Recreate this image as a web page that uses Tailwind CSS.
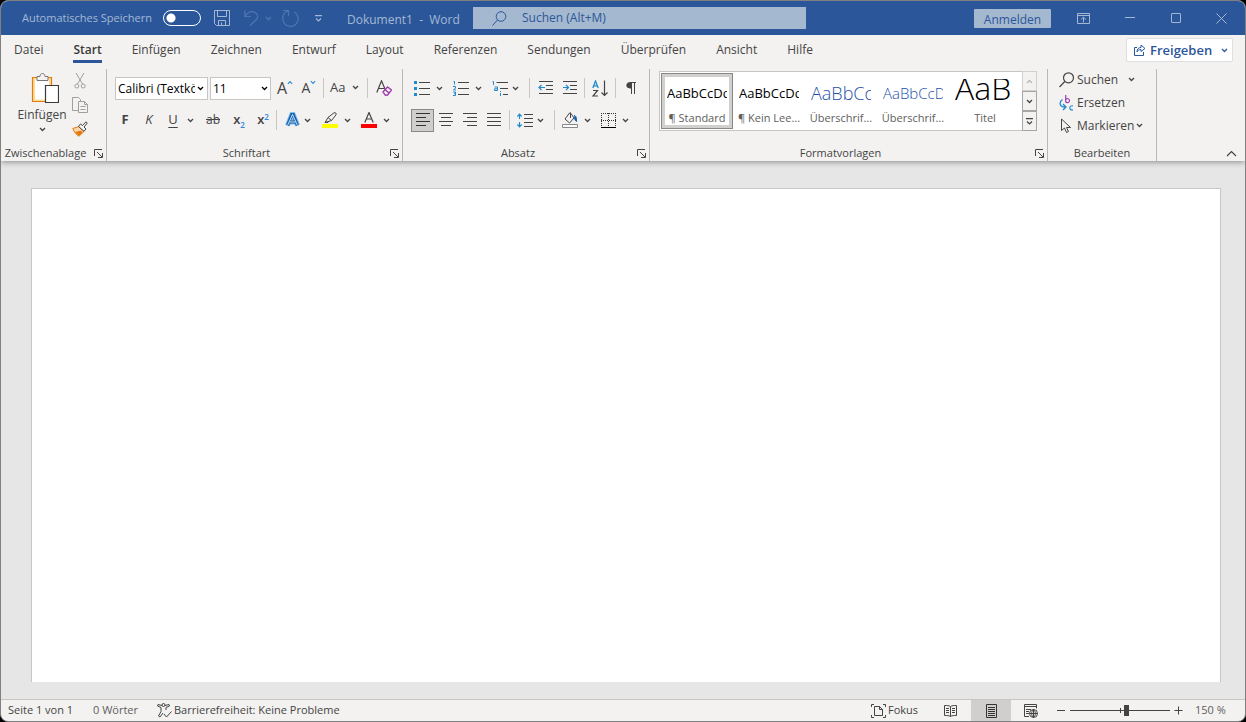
<!DOCTYPE html>
<html lang="de">
<head>
<meta charset="utf-8">
<meta name="viewport" content="width=device-width, initial-scale=1">
<title>Dokument1 - Word</title>
<script src="https://cdn.jsdelivr.net/npm/@tailwindcss/browser@4"></script>
</head>
<body class="bg-black font-['Open_Sans','Noto_Sans',sans-serif] text-xs text-[#444444]">
<svg class="hidden">
  <symbol id="chev" viewBox="0 0 7 5"><path d="M1 1l2.5 2.5L6 1" fill="none" stroke="currentColor" stroke-width="1.3"/></symbol>
  <symbol id="launch" viewBox="0 0 9 9"><path d="M.5 7V.5H8M3 3l5 5M8.500 4v4.500H4" fill="none" stroke="currentColor"/></symbol>
</svg>
<div class="flex h-screen min-w-[1160px] flex-col overflow-hidden rounded-lg border border-[#808080] bg-[#f3f2f1]">

  <!-- Title bar -->
  <header class="flex h-[34px] shrink-0 items-center bg-[#2b579a] text-[#a4b8d4]">
    <label for="autosave" class="ml-[21px] w-[141px] text-[11px] whitespace-nowrap">Automatisches Speichern</label>
    <input id="autosave" type="checkbox" class="h-4 w-[38px] appearance-none rounded-full border border-white bg-[radial-gradient(circle_at_7px_7px,white_4px,transparent_5px)]">
    <button aria-label="Speichern" class="ml-[11px] grid size-5 place-items-center"><svg class="size-4" viewBox="0 0 16 16" fill="none" stroke="currentColor"><path d="M.5.5h15v15H2.500L.5 13.500zM3.500.5v6h9v-6M4.500 15.500v-5h7v5M7.500 15v-2.500"/></svg></button>
    <button aria-label="Rückgängig" class="ml-3 flex items-center gap-1.5 text-[#4f76b0]"><svg class="h-4 w-[15px]" viewBox="0 0 15 16" fill="none" stroke="currentColor" stroke-width="1.200"><path d="M.8.5v6h6M1 6.300C4 2 8 .8 11 2.500c3.500 2 3.500 5 1 7.500L6 15.500"/></svg><svg class="h-[5px] w-[7px]"><use href="#chev"/></svg></button>
    <button aria-label="Wiederholen" class="ml-2.5 text-[#4f76b0]"><svg class="h-[18px] w-[17px]" viewBox="0 0 17 18" fill="none" stroke="currentColor" stroke-width="1.200"><path d="M1 1.500h5.500V7M6.500 1.800C2.500 3 .8 6 .8 9.500a7.700 7.700 0 1 0 11.500-6.500"/></svg></button>
    <button aria-label="Symbolleiste anpassen" class="ml-4"><svg class="h-[7px] w-[7px]" viewBox="0 0 7 7" fill="none" stroke="currentColor" stroke-width="1.200"><path d="M0 .6h7M1 3.500L3.500 6 6 3.500"/></svg></button>
    <h1 class="ml-[25px] w-[126px] whitespace-pre pt-1">Dokument1  -  Word</h1>
    <div class="flex h-[22px] w-[333px] items-center bg-[#a4b8d0] text-[#2b579a]">
      <svg class="ml-[19px] size-[15px] shrink-0" viewBox="0 0 15 15" fill="none" stroke="currentColor"><circle cx="9" cy="5.500" r="4.800"/><path d="M5.500 9L.5 14.500"/></svg>
      <input type="text" aria-label="Suchen" placeholder="Suchen (Alt+M)" class="ml-[15px] w-full min-w-0 outline-none placeholder:text-[#2b579a]">
    </div>
    <button class="mr-[26px] ml-auto h-[19px] w-[77px] rounded-[1px] bg-[#a4b8d0] pt-0.5 leading-[17px] text-[#2b579a]">Anmelden</button>
    <button aria-label="Menüband-Anzeigeoptionen"><svg class="h-[11px] w-[13px]" viewBox="0 0 13 11" fill="none" stroke="currentColor"><path d="M.5.5h12v10H.5zM.5 2.500h12M6.500 9.500V4.500M4 6.500l2.500-2.300L9 6.500"/></svg></button>
    <button aria-label="Minimieren" class="ml-[35px]"><svg class="h-[11px] w-2.5" viewBox="0 0 10 11" stroke="currentColor"><path d="M0 4.500h10"/></svg></button>
    <button aria-label="Maximieren" class="ml-9"><svg class="size-2.5" viewBox="0 0 10 10" fill="none" stroke="currentColor"><rect x=".5" y=".5" width="9" height="9" rx=".5"/></svg></button>
    <button aria-label="Schließen" class="mr-[18px] ml-[35px]"><svg class="size-[11px]" viewBox="0 0 11 11" stroke="currentColor"><path d="M.5.5l10 10M10.500.5l-10 10"/></svg></button>
  </header>

  <!-- Ribbon tabs -->
  <nav class="z-20 flex h-[31px] shrink-0 items-start gap-[30px] bg-[#f3f2f1] pl-[13px] leading-[30px]">
    <a href="#">Datei</a>
    <a href="#" class="flex h-7 flex-col border-b-3 border-[#2b579a] font-semibold text-[#3b3a39]">Start</a>
    <a href="#">Einfügen</a>
    <a href="#">Zeichnen</a>
    <a href="#">Entwurf</a>
    <a href="#">Layout</a>
    <a href="#">Referenzen</a>
    <a href="#">Sendungen</a>
    <a href="#">Überprüfen</a>
    <a href="#">Ansicht</a>
    <a href="#">Hilfe</a>
    <button class="mt-[3px] mr-3 ml-auto flex h-6 w-[107px] items-center rounded-[2px] border border-[#e1dfdd] bg-white pl-1.5 text-[13px] font-semibold text-[#2b579a]"><svg class="mr-1 h-3 w-[13px]" viewBox="0 0 13 12" fill="none" stroke="currentColor"><path d="M4 3.500H1.500v8h9V8M4 8c0-3 1.500-4.500 4-4.500V1L12 4.500 8 7.500V5.500C6 5.500 5 6.500 4 8z"/></svg>Freigeben<svg class="ml-auto mr-1 h-[5px] w-[7px]"><use href="#chev"/></svg></button>
  </nav>

  <!-- Ribbon -->
  <section class="z-10 flex h-[95px] shrink-0 items-start pt-[3px] shadow-[0_1px_6px_#00000066]">

    <div class="flex h-[92px] w-[106px] shrink-0 flex-col border-r border-[#b8b7b6] pt-1">
      <div class="flex items-start">
        <button class="ml-[13px] flex w-14 flex-col items-center"><svg class="ml-1.5 h-8 w-7" viewBox="0 0 28 32" fill="none"><path d="M1.500 4.500h19v24h-19z" fill="#f9dd9a" stroke="#e57a0c" stroke-width="1.200"/><path d="M4 6.500h14v20H4z" fill="#fff"/><path d="M6 7.500v-4h3c0-4 5-4 5 0h3v4z" fill="#f3f2f1" stroke="#777"/><path d="M14.500 12.500h13v17h-13z" fill="#fff" stroke="#3b3a39" stroke-width="1.200"/></svg><span class="mt-0.5 leading-4">Einfügen</span><svg class="mt-1 h-[5px] w-[7px]"><use href="#chev"/></svg></button>
        <div class="flex flex-col">
          <button aria-label="Ausschneiden" class="-mt-1 grid h-6 w-5 place-items-center text-[#a19f9d]"><svg class="h-4 w-3" viewBox="0 0 12 16" fill="none" stroke="currentColor"><path d="M2 0l6.500 11M10 0L3.500 11"/><circle cx="2.800" cy="13" r="2"/><circle cx="9.200" cy="13" r="2"/></svg></button>
          <button aria-label="Kopieren" class="grid h-6 w-5 place-items-center text-[#a19f9d]"><svg class="size-4" viewBox="0 0 16 16" fill="none" stroke="currentColor"><path d="M6 13.500H.5V.5h6l2 2v2"/><path d="M6.500 4.500h6l3 3v8h-9zM12.500 4.500v3h3M8.500 9.500h5M8.500 12.500h5"/></svg></button>
          <button aria-label="Format übertragen" class="grid h-6 w-5 place-items-center"><svg class="size-4" viewBox="0 0 16 16"><path d="M.8 7.500L7 5.500l5 5L7 15.200C4.500 14 2 11 .8 7.500z" fill="#f8d7a8" stroke="#e57a0c"/><path d="M3 11l6-1.500 1.500 2L7 15z" fill="#e57a0c"/><path d="M6.500 5.500l2-2.500 2 1.500L14 .8l1.300 1.300L12 6l2 2-2 2.300z" fill="#f3f2f1" stroke="#444"/></svg></button>
        </div>
      </div>
      <div class="mt-auto flex h-4 items-center"><span class="flex-1 pr-1 text-center text-[11px]">Zwischenablage</span><button aria-label="Zwischenablage öffnen" class="mr-[3px] w-[9px]"><svg class="size-[9px]"><use href="#launch"/></svg></button></div>
    </div>

    <div class="flex h-[92px] w-[296px] shrink-0 flex-col border-r border-[#b8b7b6] pt-[7px]">
      <div class="ml-2 flex h-6 items-center">
        <label class="flex h-[23px] w-[93px] items-center self-end border border-[#c8c6c4] bg-white px-0.5 text-black"><input aria-label="Schriftart" value="Calibri (Textkörper)" class="w-[77px] outline-none"><svg class="ml-0.5 h-[5px] w-[7px] shrink-0"><use href="#chev"/></svg></label>
        <label class="ml-0.5 flex h-[23px] w-[61px] items-center self-end border border-[#c8c6c4] bg-white px-0.5 text-black"><input aria-label="Schriftgrad" value="11" class="w-[46px] outline-none"><svg class="ml-0.5 h-[5px] w-[7px] shrink-0"><use href="#chev"/></svg></label>
        <button aria-label="Schriftgrad vergrößern" class="ml-0.5 flex w-6 justify-center"><span class="text-base leading-5">A</span><svg class="mt-0.5 h-[5px] w-[6px] text-[#2b88d8]" viewBox="0 0 7 5"><path d="M1 4l2.500-2.500L6 4" fill="none" stroke="currentColor" stroke-width="1.300"/></svg></button>
        <button aria-label="Schriftgrad verkleinern" class="flex w-6 justify-center"><span class="text-sm leading-5">A</span><svg class="mt-0.5 h-[5px] w-[6px] text-[#2b88d8]"><use href="#chev"/></svg></button>
        <i class="mx-0.5 h-5 w-px bg-[#c8c6c4]"></i>
        <button aria-label="Groß-/Kleinschreibung" class="ml-1 flex w-[29px] items-center justify-between text-[13px]">Aa<svg class="h-[5px] w-[7px]"><use href="#chev"/></svg></button>
        <i class="mr-1 ml-2 h-5 w-px bg-[#c8c6c4]"></i>
        <button aria-label="Formatierung löschen" class="grid w-6 place-items-center"><svg class="size-4" viewBox="0 0 16 16" fill="none"><path d="M.8 12.500L5.500.8l3.800 9M2.500 8.500h5.500" stroke="#444" stroke-width="1.200"/><path d="M7 12l4.500-5 4 3-4 5-2 .3z" fill="#f3f2f1" stroke="#a03cb0" stroke-width="1.400"/><path d="M9 9.500l4 3.500" stroke="#a03cb0" stroke-width="1.400"/></svg></button>
      </div>
      <div class="mt-2 ml-1.5 flex h-6 items-center text-[13px]">
        <button class="w-6 font-bold">F</button>
        <button class="w-6 italic">K</button>
        <button class="w-6 underline underline-offset-3">U</button>
        <button aria-label="Unterstreichungsart" class="ml-0.5 w-2"><svg class="h-[5px] w-[7px]"><use href="#chev"/></svg></button>
        <button class="ml-1.5 w-6 text-xs line-through">ab</button>
        <button class="ml-0.5 w-6 font-semibold">x<sub class="-bottom-1 text-[8px] text-[#2b88d8]">2</sub></button>
        <button class="w-6 font-semibold">x<sup class="text-[8px] text-[#2b88d8]">2</sup></button>
        <i class="mr-[3px] ml-px h-5 w-px bg-[#c8c6c4]"></i>
        <button aria-label="Texteffekte" class="grid w-6 place-items-center"><svg class="h-4 w-[15px]" viewBox="0 0 15 16" fill="none"><path d="M2.500 13.500L6.800 2.500h1.400l4.300 11M4.500 10h6" stroke="#83beec" stroke-width="5"/><path d="M2.500 13.500L6.800 2.500h1.400l4.300 11M4.500 10h6" stroke="#1463b0" stroke-width="3.200"/><path d="M2.500 13.500L7.500 2.500l5 11M4.500 10h6" stroke="#fff" stroke-width=".8"/></svg></button>
        <button aria-label="Texteffekte Auswahl" class="w-2"><svg class="h-[5px] w-[7px]"><use href="#chev"/></svg></button>
        <button aria-label="Texthervorhebung" class="ml-1.5 grid w-6 place-items-center"><svg class="size-4" viewBox="0 0 16 16" fill="none" stroke="#444"><path d="M0 12h16v4H0z" fill="#ff0" stroke="none"/><path d="M3 10.500l3-5L12 .8c1.500-.6 2.500.6 2 2L9.500 8.500zM6 5.500l3.500 3M3 10.500h3l1-1.200"/></svg></button>
        <button aria-label="Hervorhebungsfarbe" class="ml-0.5 w-2"><svg class="h-[5px] w-[7px]"><use href="#chev"/></svg></button>
        <button aria-label="Schriftfarbe" class="ml-[5px] grid w-6 place-items-center"><svg class="size-4" viewBox="0 0 16 16" fill="none" stroke="#444"><path d="M0 12h16v4H0z" fill="red" stroke="none"/><path d="M3.800 10.500L8 .5l4.200 10M5.300 7h5.400" stroke-width="1.200"/></svg></button>
        <button aria-label="Schriftfarbe wählen" class="ml-0.5 w-2"><svg class="h-[5px] w-[7px]"><use href="#chev"/></svg></button>
      </div>
      <div class="mt-auto flex h-4 items-center"><span class="flex-1 pr-1 text-center text-[11px]">Schriftart</span><button aria-label="Schriftart öffnen" class="mr-[3px] w-[9px]"><svg class="size-[9px]"><use href="#launch"/></svg></button></div>
    </div>

    <div class="flex h-[92px] w-[247px] shrink-0 flex-col border-r border-[#b8b7b6] pt-[7px]">
      <div class="ml-[7px] flex h-6 items-center">
        <button aria-label="Aufzählungszeichen" class="grid w-6 place-items-center"><svg class="size-4" viewBox="0 0 16 16"><path d="M0 1h3v3H0zM0 7h3v3H0zM0 13h3v3H0z" fill="#1e8bcd"/><path d="M5 2.500h11M5 8.500h11M5 14.500h11" stroke="#444"/></svg></button>
        <button aria-label="Aufzählungsart" class="ml-0.5 w-2"><svg class="h-[5px] w-[7px]"><use href="#chev"/></svg></button>
        <button aria-label="Nummerierung" class="ml-[5px] grid w-6 place-items-center"><svg class="size-4" viewBox="0 0 16 16"><path d="M.5 1.500h1v3M0 6.500h2.500v1.500L.5 10h2.500M0 12h2.500v3.500H0M1 13.700h1.500" fill="none" stroke="#1e8bcd"/><path d="M5 2.500h11M5 8.500h11M5 14.500h11" stroke="#444"/></svg></button>
        <button aria-label="Nummerierungsart" class="ml-0.5 w-2"><svg class="h-[5px] w-[7px]"><use href="#chev"/></svg></button>
        <button aria-label="Liste mit mehreren Ebenen" class="ml-[5px] grid w-6 place-items-center"><svg class="size-4" viewBox="0 0 16 16"><path d="M.5 1.500h1v3.500M2.500 7h3v3.500h-3V8.800h3M8.500 11v1M8.500 13v3" fill="none" stroke="#1e8bcd"/><path d="M4.500 2.500H16M8 8.500h8M11 14.500h5" stroke="#444"/></svg></button>
        <button aria-label="Listenart" class="w-2"><svg class="h-[5px] w-[7px]"><use href="#chev"/></svg></button>
        <i class="mr-[3px] ml-[9px] h-5 w-px bg-[#c8c6c4]"></i>
        <button aria-label="Einzug verkleinern" class="grid w-6 place-items-center"><svg class="h-[14px] w-[15px]" viewBox="0 0 15 14" fill="none"><path d="M1 .5h14M8 4.500h7M8 8.500h7M1 12.500h14" stroke="#444"/><path d="M1 6.500h6M3.500 4L1 6.500 3.500 9" stroke="#1e8bcd" stroke-width="1.200"/></svg></button>
        <button aria-label="Einzug vergrößern" class="grid w-6 place-items-center"><svg class="h-[14px] w-[15px]" viewBox="0 0 15 14" fill="none"><path d="M1 .5h14M8 4.500h7M8 8.500h7M1 12.500h14" stroke="#444"/><path d="M1 6.500h5.500M4 4l2.500 2.500L4 9" stroke="#1e8bcd" stroke-width="1.200"/></svg></button>
        <i class="mx-[3px] h-5 w-px bg-[#c8c6c4]"></i>
        <button aria-label="Sortieren" class="grid w-6 place-items-center"><svg class="h-[17px] w-4" viewBox="0 0 16 17" fill="none"><path d="M.8 8L3.500 1l2.700 7M1.500 5.800h4" stroke="#1e8bcd" stroke-width="1.300"/><path d="M1 10.500h4.500L1 16h5M12.500.5v15M9.500 12.500l3 3 3-3" stroke="#444" stroke-width="1.200"/></svg></button>
        <i class="mx-[3px] h-5 w-px bg-[#c8c6c4]"></i>
        <button aria-label="Absatzmarken anzeigen" class="grid w-6 place-items-center"><svg class="h-3 w-2.5" viewBox="0 0 10 12"><path d="M4.500 0H10v1H9v11H8V1H6v11H5V6.500H4C-1 6.500-1 0 4.500 0z" fill="#444"/></svg></button>
      </div>
      <div class="mt-2 ml-2 flex h-6 items-center">
        <button aria-label="Linksbündig" aria-pressed="true" class="grid h-[23px] w-[23px] place-items-center border border-[#8a8886] bg-[#cfcecd]"><svg class="size-[14px]" viewBox="0 0 14 14" stroke="#333"><path d="M0 .5h14M0 4.500h10M0 8.500h14M0 12.500h10"/></svg></button>
        <button aria-label="Zentriert" class="grid w-6 place-items-center"><svg class="size-[14px]" viewBox="0 0 14 14" stroke="#444"><path d="M0 .5h14M2 4.500h10M0 8.500h14M2 12.500h10"/></svg></button>
        <button aria-label="Rechtsbündig" class="grid w-6 place-items-center"><svg class="size-[14px]" viewBox="0 0 14 14" stroke="#444"><path d="M0 .5h14M4 4.500h10M0 8.500h14M4 12.500h10"/></svg></button>
        <button aria-label="Blocksatz" class="grid w-6 place-items-center"><svg class="size-[14px]" viewBox="0 0 14 14" stroke="#444"><path d="M0 .5h14M0 4.500h14M0 8.500h14M0 12.500h14"/></svg></button>
        <i class="mx-[3px] h-5 w-px bg-[#c8c6c4]"></i>
        <button aria-label="Zeilenabstand" class="grid w-6 place-items-center"><svg class="h-[15px] w-4" viewBox="0 0 16 15" fill="none"><path d="M7 1.500h9M7 5.500h9M7 9.500h9M7 13.500h9" stroke="#444"/><path d="M2.500 1v5M2.500 9v5M.3 3.500l2.200-2.300 2.200 2.300M.3 11.500l2.200 2.300 2.200-2.300" stroke="#1e8bcd" stroke-width="1.200"/></svg></button>
        <button aria-label="Abstandswert" class="w-2"><svg class="h-[5px] w-[7px]"><use href="#chev"/></svg></button>
        <i class="mr-[3px] ml-[9px] h-5 w-px bg-[#c8c6c4]"></i>
        <button aria-label="Schattierung" class="grid w-6 place-items-center"><svg class="size-4" viewBox="0 0 16 16" fill="none" stroke="#444"><path d="M.5 12.500h15v3H.5z" fill="#fff" stroke="#888"/><path d="M7.500 1L3 7l4.500 4L12 6 9 1.500zM8.500.5v5.500"/><path d="M12 3.500c2 0 2.500 2 2.500 6-1.500-1-2-2.500-2-4.500" fill="#1463b0" stroke="#1463b0"/></svg></button>
        <button aria-label="Schattierungsfarbe" class="ml-0.5 w-2"><svg class="h-[5px] w-[7px]"><use href="#chev"/></svg></button>
        <button aria-label="Rahmen" class="ml-1 grid w-6 place-items-center"><svg class="size-[15px]" viewBox="0 0 15 15" fill="none" stroke="#333"><path d="M0 .5h15M0 7.500h15M.5 0v13M7.500 0v13M14.500 0v13" stroke-dasharray="1 1"/><path d="M0 14.500h15" stroke="#000"/></svg></button>
        <button aria-label="Rahmenart" class="ml-0.5 w-2"><svg class="h-[5px] w-[7px]"><use href="#chev"/></svg></button>
      </div>
      <div class="mt-auto flex h-4 items-center"><span class="flex-1 pr-1 text-center text-[11px]">Absatz</span><button aria-label="Absatz öffnen" class="mr-[3px] w-[9px]"><svg class="size-[9px]"><use href="#launch"/></svg></button></div>
    </div>

    <div class="flex h-[92px] w-[398px] shrink-0 flex-col border-r border-[#b8b7b6] pt-0.5">
      <div class="mr-2.5 ml-[9px] flex h-[60px] border border-[#c8c6c4] bg-white leading-4">
        <div class="grid flex-1 grid-cols-5 p-px">
          <button class="flex flex-col items-center border border-[#8a8886] pt-2 ring-3 ring-[#d2d0ce] ring-inset"><span class="flex h-[22px] w-[60px] items-center overflow-hidden text-[13px] text-black">AaBbCcDd</span><span class="mt-1.5 text-[11px] text-[#605e5c]">¶ Standard</span></button>
          <button class="flex flex-col items-center pt-[9px]"><span class="flex h-[22px] w-[60px] items-center overflow-hidden text-[13px] text-black">AaBbCcDd</span><span class="mt-1.5 text-[11px] text-[#605e5c]">¶ Kein Lee...</span></button>
          <button class="flex flex-col items-center pt-[9px]"><span class="flex h-[22px] w-[60px] items-center overflow-hidden text-lg font-light text-[#2450a8]">AaBbCc</span><span class="mt-1.5 text-[11px] text-[#605e5c]">Überschrif...</span></button>
          <button class="flex flex-col items-center pt-[9px]"><span class="flex h-[22px] w-[60px] items-center overflow-hidden text-[15px] font-light text-[#2450a8]">AaBbCcDd</span><span class="mt-1.5 text-[11px] text-[#605e5c]">Überschrif...</span></button>
          <button class="flex flex-col items-center pt-1.5"><span class="flex h-[25px] w-[60px] items-end overflow-hidden text-[32px] leading-[32px] font-light text-black">AaB</span><span class="mt-1.5 text-[11px] text-[#605e5c]">Titel</span></button>
        </div>
        <div class="-my-px -mr-px flex w-[15px] flex-col *:grid *:flex-1 *:place-items-center *:border">
          <button aria-label="Nach oben" class="border-[#d2d0ce] bg-[#f3f2f1] text-[#b8b7b6]"><svg class="h-[5px] w-[7px]" viewBox="0 0 7 5"><path d="M1 4l2.500-2.500L6 4" fill="none" stroke="currentColor" stroke-width="1.300"/></svg></button>
          <button aria-label="Nach unten" class="border-[#a8a6a4] bg-[#f3f2f1]"><svg class="h-[5px] w-[7px]"><use href="#chev"/></svg></button>
          <button aria-label="Weitere" class="border-[#a8a6a4] bg-[#f3f2f1]"><svg class="h-[7px] w-[7px]" viewBox="0 0 7 7" fill="none" stroke="currentColor" stroke-width="1.200"><path d="M0 .6h7M1 3.500L3.500 6 6 3.500"/></svg></button>
        </div>
      </div>
      <div class="mt-auto flex h-4 items-center"><span class="flex-1 pr-1 text-center text-[11px]">Formatvorlagen</span><button aria-label="Formatvorlagen öffnen" class="mr-[3px] w-[9px]"><svg class="size-[9px]"><use href="#launch"/></svg></button></div>
    </div>

    <div class="flex h-[92px] w-[109px] shrink-0 flex-col border-r border-[#b8b7b6] pl-[11px]">
      <button class="flex h-[23px] items-center pb-0.5"><svg class="mr-0.5 size-4" viewBox="0 0 16 16" fill="none" stroke="#444" stroke-width="1.200"><circle cx="9.500" cy="5.800" r="5"/><path d="M5.800 9.500L.5 15"/></svg>Suchen<svg class="ml-2.5 h-[5px] w-[7px]"><use href="#chev"/></svg></button>
      <button class="flex h-[23px] items-center pb-0.5"><svg class="mr-0.5 size-4" viewBox="0 0 16 16" fill="none"><path d="M6.700 0v7.500M6.700 4.500c1-1.500 4-1 3.800 1.200s-2.800 2.500-3.800 1" stroke="#a03cb0" stroke-width="1.200"/><path d="M14 11c-4-1.500-4.500 5 0 3.800" stroke="#1e8bcd" stroke-width="1.200"/><path d="M3.500 4.500C0 7 0 12 6 12M4 9l3 3-3 3" stroke="#1e8bcd" stroke-width="1.300"/></svg>Ersetzen</button>
      <button class="flex h-[23px] items-center pb-0.5"><svg class="mr-0.5 size-4" viewBox="0 0 16 16" fill="none" stroke="#444"><path d="M2.500 1v11.500l3-2.500 2 4.500 2-1-2-4h4z"/></svg>Markieren<svg class="ml-0.5 h-[5px] w-[7px]"><use href="#chev"/></svg></button>
      <span class="mt-auto -ml-[11px] text-center text-[11px] leading-4">Bearbeiten</span>
    </div>

    <button aria-label="Menüband reduzieren" class="mt-auto mr-2 mb-1 ml-auto"><svg class="h-[7px] w-[11px]" viewBox="0 0 11 7"><path d="M1 6l4.500-4.500L10 6" fill="none" stroke="#444" stroke-width="1.200"/></svg></button>
  </section>

  <!-- Document -->
  <main class="flex flex-1 bg-[#e6e6e6] pt-[27px] pr-6 pb-[17px] pl-[30px]">
    <article contenteditable="true" aria-label="Dokumentseite" class="flex-1 border border-b-0 border-[#c6c6c6] bg-white outline-none"></article>
  </main>

  <!-- Status bar -->
  <footer class="flex h-[22px] shrink-0 items-center border-t border-[#c6c6c6] text-[11px]">
    <span class="ml-[7px] w-[85px]">Seite 1 von 1</span>
    <span class="w-16 text-[#605e5c]">0 Wörter</span>
    <button class="flex items-center gap-0.5"><svg class="h-[15px] w-[15px]" viewBox="0 0 15 15" fill="none" stroke="#444"><circle cx="6.500" cy="2" r="1.500"/><path d="M5 2.500L1 1.500.5 3l3.500 1.500v4L1.500 13l1.500 1 3-4M8 2.500l4-1 .5 1.500L9 4.500V7M7 11l2.500 3 5-5.500"/></svg>Barrierefreiheit: Keine Probleme</button>
    <button class="ml-auto flex w-[73px] items-center gap-0.5"><svg class="h-[14px] w-[15px]" viewBox="0 0 15 14" fill="none" stroke="#444"><path d="M3 .5H.5V3M.5 11v2.500H3M12 .5h2.500V3M14.500 11v2.500H12M3.500 2.500h5l3 3v6h-8zM8.500 2.500v3h3"/></svg>Fokus</button>
    <button aria-label="Lesemodus" class="grid h-full w-[27px] place-items-start content-center"><svg class="h-3 w-[13px]" viewBox="0 0 13 12" fill="none" stroke="#444"><path d="M6.500 1.500C5 .5 3 .5.5.5v10c2.500 0 4.500 0 6 1 1.500-1 3.500-1 6-1V.5c-2.500 0-4.500 0-6 1zM6.500 1.500v10M2 3.500h3M2 5.500h3M2 7.500h3M8 3.500h3M8 5.500h3M8 7.500h3"/></svg></button>
    <button aria-label="Drucklayout" aria-pressed="true" class="grid h-full w-10 place-items-center bg-[#d0cfce]"><svg class="h-[14px] w-[11px]" viewBox="0 0 11 14" fill="none" stroke="#333"><path d="M.5.5h10v13H.5zM2 3.500h7M2 5.500h7M2 7.500h7M2 9.500h7M2 11.500h7"/></svg></button>
    <button aria-label="Weblayout" class="ml-[13px]"><svg class="size-[14px]" viewBox="0 0 14 14" fill="none" stroke="#444"><path d="M5 12.500H.5V.5h12v4M.5 2.500h12M2 5.500h5M2 7.500h3M2 9.500h3"/><circle cx="9.500" cy="9.500" r="4"/><path d="M5.500 9.500h8M9.500 5.500v8M9.500 5.500c-2.500 2-2.500 6 0 8 2.500-2 2.500-6 0-8"/></svg></button>
    <button aria-label="Verkleinern" class="ml-[19px]"><svg class="size-[9px]" viewBox="0 0 9 9" stroke="#444"><path d="M0 4.500h8"/></svg></button>
    <input type="range" min="10" max="260" value="152" aria-label="Zoom" class="mx-1 h-3 w-[100px] appearance-none bg-[linear-gradient(#444,#444),linear-gradient(#444,#444)] bg-[length:100%_1px,1px_5px] bg-[position:center,center] bg-no-repeat [&::-webkit-slider-thumb]:h-[11px] [&::-webkit-slider-thumb]:w-[5px] [&::-webkit-slider-thumb]:appearance-none [&::-webkit-slider-thumb]:bg-[#444]">
    <button aria-label="Vergrößern"><svg class="size-[9px]" viewBox="0 0 9 9" stroke="#444"><path d="M.5 4.500h8M4.500.5v8"/></svg></button>
    <button class="mr-3.5 ml-3 w-9 text-left whitespace-nowrap text-[#605e5c]">150 %</button>
  </footer>
</div>
</body>
</html>
